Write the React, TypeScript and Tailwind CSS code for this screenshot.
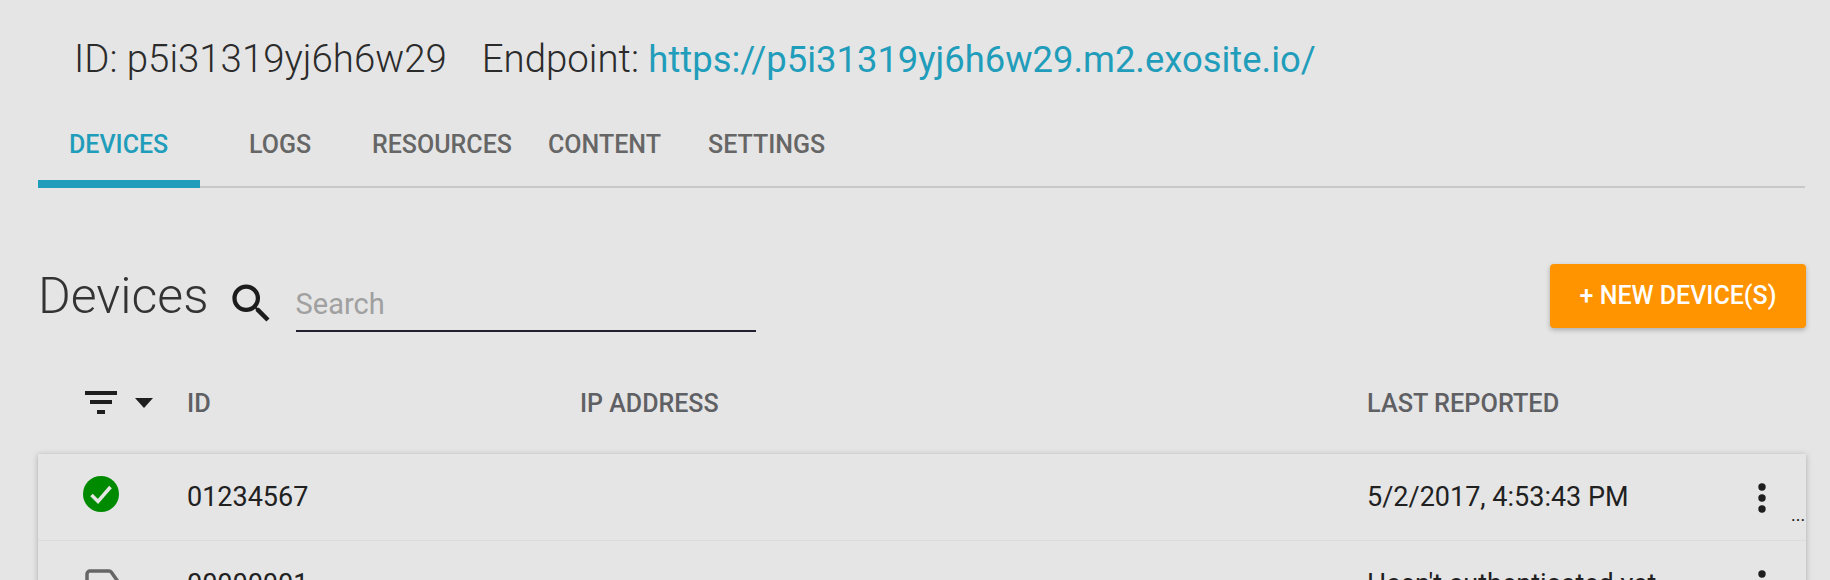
import React from 'react';

const tabs = ['DEVICES', 'LOGS', 'RESOURCES', 'CONTENT', 'SETTINGS'];
const tabClass: Record<string, string> = {
  DEVICES: 'w-[162px] pl-[31px] text-[#1f9dba] border-b-[8px] border-[#1f9dba]',
  LOGS: 'w-[162px] pl-[49px] text-[#666666]',
  RESOURCES: 'w-[176px] pl-[10px] text-[#666666]',
  CONTENT: 'w-[160px] pl-[10px] text-[#666666]',
  SETTINGS: 'w-[130px] pl-[10px] text-[#666666]',
};

const MoreIcon = () => (
  <svg width="8" height="30" viewBox="0 0 8 30" fill="#1e1e1e">
    <circle cx="4" cy="4" r="3.7" />
    <circle cx="4" cy="15" r="3.7" />
    <circle cx="4" cy="26" r="3.7" />
  </svg>
);

export default function App() {
  return (
    <div className="w-[1830px] h-[580px] overflow-hidden bg-[#e5e5e5] font-['Roboto',sans-serif]">
      <div className="pl-[74px] pt-[37px] h-[100px] text-[38.4px] leading-[44px] font-light text-[#2b2b2b] whitespace-nowrap">
        <span>ID: p5i31319yj6h6w29</span>
        <span className="ml-[35px]">Endpoint: </span>
        <span className="text-[36.4px] font-normal text-[#1f9dba]">https://p5i31319yj6h6w29.m2.exosite.io/</span>
      </div>

      <div className="ml-[38px] w-[1767px] h-[88px] flex items-stretch border-b-2 border-[#c8c8c8]">
        {tabs.map((tab) => (
          <div key={tab} className={`h-[88px] shrink-0 pt-[31px] text-[25px] leading-[28px] font-medium ${tabClass[tab]}`}>
            {tab}
          </div>
        ))}
      </div>

      <div className="ml-[38px] mr-[24px] mt-[76px] h-[64px] flex items-start">
        <h1 className="text-[50px] leading-[64px] font-light text-[#333333]">Devices</h1>
        <svg className="ml-[17px] mt-[14px]" width="51" height="51" viewBox="0 0 24 24" fill="#1c1c1c">
          <path d="M15.5 14h-.79l-.28-.27A6.47 6.47 0 0 0 16 9.5 6.5 6.5 0 1 0 9.5 16c1.61 0 3.09-.59 4.23-1.57l.27.28v.79l5 4.99L20.49 19l-4.99-5zm-6 0C7.01 14 5 11.99 5 9.5S7.01 5 9.5 5 14 7.01 14 9.5 11.99 14 9.5 14z" />
        </svg>
        <div className="ml-[19px] w-[460px] h-[68px] pt-[20px] text-[29px] leading-[40px] font-normal text-[#a0a0a0] border-b-2 border-[#20202e]">
          Search
        </div>
        <button className="ml-auto w-[256px] h-[64px] rounded bg-[#ff9400] text-white text-[25px] font-medium shadow-[0_2px_5px_rgba(0,0,0,0.25)]">
          + NEW DEVICE(S)
        </button>
      </div>

      <div className="ml-[38px] w-[1768px] mt-[52px] h-[48px] flex items-center text-[25.3px] font-medium text-[#5f6063]">
        <div className="w-[149px] flex items-start">
          <svg className="ml-[47px] mt-[-4px]" width="32" height="23" viewBox="0 0 32 23" fill="#1e1e1e">
            <rect x="0" y="0" width="32" height="4" />
            <rect x="5" y="9" width="22" height="4" />
            <rect x="12" y="19" width="8" height="4" />
          </svg>
          <svg className="ml-[18px] mt-[3px]" width="18" height="10" viewBox="0 0 18 10" fill="#1e1e1e">
            <path d="M0 0h18L9 10z" />
          </svg>
        </div>
        <div className="w-[393px]">ID</div>
        <div className="w-[787px] text-[25px]">IP ADDRESS</div>
        <div>LAST REPORTED</div>
      </div>

      <div className="ml-[38px] w-[1768px] mt-[26px] bg-[#e5e5e5] shadow-[0_1px_6px_rgba(0,0,0,0.25)] text-[27px] text-[#212121]">
        <div className="h-[87px] flex border-b border-[#dcdcdc]">
          <div className="w-[149px] pl-[45px] pt-[22px]">
            <svg width="36" height="36" viewBox="0 0 36 36">
              <circle cx="18" cy="18" r="18" fill="#008a00" />
              <path d="M8.5 19l6.5 6.5L27.5 11" fill="none" stroke="#e5e5e5" strokeWidth="3.5" />
            </svg>
          </div>
          <div className="w-[393px] pt-[26px] leading-[34px]">01234567</div>
          <div className="w-[787px]" />
          <div className="w-[391px] pt-[26px] leading-[34px] whitespace-nowrap">5/2/2017, 4:53:43 PM</div>
          <div className="relative flex-1">
            <div className="absolute left-0 top-[29px]"><MoreIcon /></div>
            <div className="absolute left-[33px] top-[52px] text-[18px] leading-[18px]">...</div>
          </div>
        </div>
        <div className="h-[86px] flex">
          <div className="w-[149px] pl-[47px] pt-[28px]">
            <svg width="40" height="32" viewBox="0 0 40 32">
              <path d="M2 30V5a3 3 0 0 1 3-3h19a3 3 0 0 1 2.4 1.2L36 17" fill="none" stroke="#666666" strokeWidth="3.5" />
            </svg>
          </div>
          <div className="w-[393px] pt-[26px] leading-[34px]">00000001</div>
          <div className="w-[787px]" />
          <div className="w-[391px] pt-[26px] leading-[34px] whitespace-nowrap">Hasn't authenticated yet</div>
          <div className="relative flex-1">
            <div className="absolute left-0 top-[29px]"><MoreIcon /></div>
          </div>
        </div>
      </div>
    </div>
  );
}
